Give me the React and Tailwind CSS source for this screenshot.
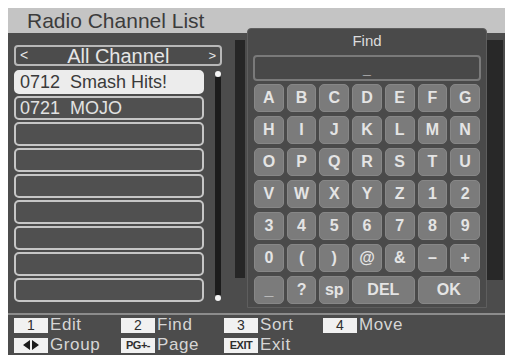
import React from 'react'

const KEY_ROWS = [
  ['A', 'B', 'C', 'D', 'E', 'F', 'G'],
  ['H', 'I', 'J', 'K', 'L', 'M', 'N'],
  ['O', 'P', 'Q', 'R', 'S', 'T', 'U'],
  ['V', 'W', 'X', 'Y', 'Z', '1', '2'],
  ['3', '4', '5', '6', '7', '8', '9'],
  ['0', '(', ')', '@', '&', '–', '+'],
]

const CHANNELS = [
  { num: '0712', name: 'Smash Hits!' },
  { num: '0721', name: 'MOJO' },
  null, null, null, null, null, null, null,
]

function Key({ label, wide, low }) {
  return (
    <div
      className={`${wide ? 'col-span-2' : ''} h-[28px] rounded-[5px] bg-[#7b7b7b] border border-[#878787] flex justify-center ${low ? 'items-end pb-[1px]' : 'items-center'} text-[16px] text-[#e4e4e4] font-semibold`}
    >
      {label}
    </div>
  )
}

function Tag({ children }) {
  return (
    <span className="w-[34px] h-[15px] bg-[#f1f1f1] flex items-center justify-center text-[14px] leading-none tracking-normal text-[#2e2e2e]">
      {children}
    </span>
  )
}

export default function App() {
  return (
    <div className="w-[509px] h-[359px] bg-white pt-[8px] pl-[8px]" style={{ fontFamily: '"Liberation Sans", Arial, sans-serif' }}>
      <div className="relative w-[497px] h-[347px] flex flex-col bg-[#4c4c4c]">
        {/* header */}
        <div className="h-[25px] bg-[#c4c4c4] pl-[19px] text-[21px] leading-[25px] text-[#3c3c3c]">
          Radio Channel List
        </div>

        {/* body */}
        <div className="h-[279px] flex pt-[7px]">
          <div className="w-[214px] pl-[6px] pt-[5px] flex flex-col">
            <div className="w-[208px] h-[21px] border-2 border-[#b8b8b8] rounded-[4px] flex items-center justify-between px-[4px] text-[#e6e6e6]">
              <span className="text-[14px]">&lt;</span>
              <span className="text-[20px] leading-none">All Channel</span>
              <span className="text-[13px]">&gt;</span>
            </div>
            <div className="flex mt-[4px]">
              <div className="w-[190px] flex flex-col gap-[2px]">
                {CHANNELS.map((ch, i) => (
                  <div
                    key={i}
                    className={`h-[24px] rounded-[5px] border-2 flex items-center pl-[4px] text-[18px] leading-none whitespace-pre ${i === 0 ? 'bg-[#ececec] border-[#ececec] text-[#3a3a3a]' : 'bg-[#505050] border-[#c6c6c6] text-[#e2e2e2]'}`}
                  >
                    {ch ? `${ch.num}  ${ch.name}` : ''}
                  </div>
                ))}
              </div>
              <div className="ml-[10px] w-[7px] h-[230px] mt-[1px] flex flex-col items-center">
                <div className="w-[6px] h-[6px] rounded-full bg-[#f4f4f4]" />
                <div className="flex-1 w-[6px] bg-[#1c1c1c]" />
                <div className="w-[6px] h-[6px] rounded-full bg-[#f4f4f4]" />
              </div>
            </div>
          </div>
          <div className="ml-[13px] w-[10px] h-[238px] bg-[#262626]" />
          <div className="flex-1" />
          <div className="w-[16px] h-[240px] bg-[#282828] mr-[2px]" />
        </div>

        {/* footer */}
        <div className="h-[2px] bg-[#8c8c8c] mt-[1px]" />
        <div className="flex-1 pl-[6px] flex flex-col text-[17px] leading-[20px] tracking-[0.6px] text-[#d6d6d6]">
          <div className="h-[20px] flex items-center">
            <div className="w-[107px] flex items-center gap-[2px]"><Tag>1</Tag>Edit</div>
            <div className="w-[103px] flex items-center gap-[2px]"><Tag>2</Tag>Find</div>
            <div className="w-[99px] flex items-center gap-[2px]"><Tag>3</Tag>Sort</div>
            <div className="flex items-center gap-[2px]"><Tag>4</Tag>Move</div>
          </div>
          <div className="h-[20px] flex items-center">
            <div className="w-[107px] flex items-center gap-[2px]">
              <Tag>
                <svg width="18" height="10" viewBox="0 0 18 10">
                  <path d="M8 0 L1 5 L8 10 Z M10 0 L17 5 L10 10 Z" fill="#1c1c1c" />
                </svg>
              </Tag>
              Group
            </div>
            <div className="w-[103px] flex items-center gap-[2px]">
              <Tag><span className="text-[11px] font-bold tracking-[-0.5px]">PG+-</span></Tag>Page
            </div>
            <div className="flex items-center gap-[2px]">
              <Tag><span className="text-[11px] font-bold tracking-[-0.5px]">EXIT</span></Tag>Exit
            </div>
          </div>
        </div>

        {/* find popup */}
        <div className="absolute left-[239px] top-[20px] w-[240px] h-[280px] bg-[#4a4a4a] border border-[#5e5e5e] rounded-t-[4px] flex flex-col px-[5px]">
          <div className="h-[24px] flex items-center justify-center text-[15px] text-[#dcdcdc]">Find</div>
          <div className="mt-[2px] h-[26px] border-2 border-[#7a7a7a] rounded-[4px] bg-[#484848] flex items-end justify-center text-[14px] font-bold text-[#e0e0e0] leading-none pb-[3px]">
            _
          </div>
          <div className="mt-[3px] px-[1px] grid grid-cols-7 gap-x-[3px] gap-y-[4px]">
            {KEY_ROWS.flat().map((k, i) => (
              <Key key={i} label={k} />
            ))}
            <Key label="_" low />
            <Key label="?" />
            <Key label="sp" />
            <Key label="DEL" wide />
            <Key label="OK" wide />
          </div>
        </div>
      </div>
    </div>
  )
}
